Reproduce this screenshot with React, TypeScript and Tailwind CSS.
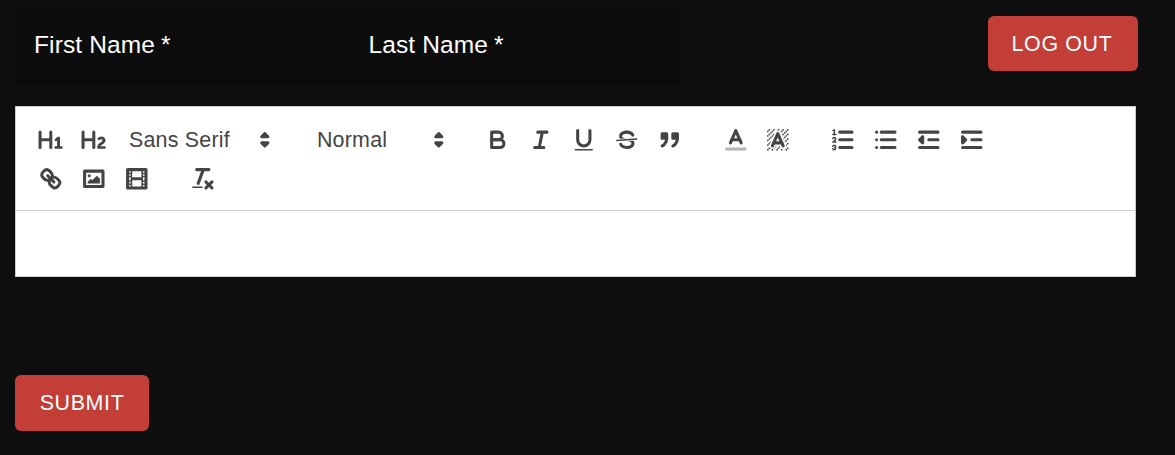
import type { ReactNode } from "react";

const S = "fill-none stroke-[#444] stroke-2 [stroke-linecap:round] [stroke-linejoin:round]";
const THIN = "fill-none stroke-[#444] stroke-1 [stroke-linecap:round] [stroke-linejoin:round]";
const SF = "fill-[#444] stroke-[#444] stroke-2 [stroke-linecap:round] [stroke-linejoin:round]";
const F = "fill-[#444]";

function Icon({ children }: { children: ReactNode }) {
  return (
    <svg viewBox="0 0 18 18" className="block size-[27.6px] shrink-0">
      {children}
    </svg>
  );
}

function Tool({ label, children }: { label: string; children: ReactNode }) {
  return (
    <button type="button" aria-label={label} className="flex h-[37px] w-[42.95px] items-center justify-center">
      <Icon>{children}</Icon>
    </button>
  );
}

function Picker({ label, className }: { label: string; className: string }) {
  return (
    <button type="button" className={`flex h-[37px] items-center justify-between text-[21.4px] leading-none text-[#444] ${className}`}>
      <span className="pt-[2px]">{label}</span>
      <Icon>
        <polygon className={S} points="7 11 9 13 11 11 7 11" />
        <polygon className={S} points="7 7 9 5 11 7 7 7" />
      </Icon>
    </button>
  );
}

const hatch = [
  [4, 4], [2, 6], [3, 5], [4, 7], [2, 12], [2, 9], [2, 15], [3, 8], [12, 2], [11, 3], [2, 3], [6, 2],
  [3, 2], [5, 3], [9, 2], [15, 14], [13, 7], [15, 5], [14, 6], [15, 8], [14, 9], [14, 3], [15, 2],
  [12, 5], [13, 4], [9, 14], [8, 15], [5, 15], [11, 15], [14, 15], [15, 11],
];

function Field({ label }: { label: string }) {
  return (
    <label className="flex h-full w-[334.5px] items-center pt-[2px] pl-[19px] text-[24.5px] leading-none tracking-[0.12px] text-white">
      {label}<span className="ml-[6px]">*</span>
    </label>
  );
}

export default function App() {
  return (
    <main className="h-[455px] w-[1175px] overflow-hidden bg-[#0e0e0e] pl-[15px] font-['Liberation_Sans',Arial,sans-serif]">
      <header className="flex h-[106px] items-start">
        <div className="mt-[8px] flex h-[73px] w-[670px] border-b border-[#080808] bg-[#0d0d0d]">
          <Field label="First Name" />
          <Field label="Last Name" />
        </div>
        <button type="button" className="mt-4 ml-[303px] h-[55px] w-[150px] rounded-[6px] bg-[#c23e37] pt-px pr-[2px] text-[21.4px] tracking-[0.65px] text-white">
          LOG OUT
        </button>
      </header>

      <section className="h-[171px] w-[1121px] border border-[#ccc] bg-white">
        <div className="flex h-[104px] flex-col gap-[2px] border-b border-[#ccc] pt-[14.4px] pl-[13px]">
          <div className="flex h-[37px] items-center">
            <Tool label="Heading 1">
              <path className={F} d="M10,4V14a1,1,0,0,1-2,0V10H3v4a1,1,0,0,1-2,0V4A1,1,0,0,1,3,4V8H8V4a1,1,0,0,1,2,0Zm6.06787,9.209H14.98975V7.59863a.54085.54085,0,0,0-.605-.60547h-.62744a1.01119,1.01119,0,0,0-.748.29688L11.645,8.56641a.5435.5435,0,0,0-.022.8584l.28613.30762a.53861.53861,0,0,0,.84717.0332l.09912-.08789a1.2137,1.2137,0,0,0,.2417-.35254h.02246s-.01123.30859-.01123.60547V13.209H12.041a.54085.54085,0,0,0-.605.60547v.43945a.54085.54085,0,0,0,.605.60547h4.02686a.54085.54085,0,0,0,.605-.60547v-.43945A.54085.54085,0,0,0,16.06787,13.209Z" />
            </Tool>
            <Tool label="Heading 2">
              <path className={F} d="M16.73975,13.81445v.43945a.54085.54085,0,0,1-.605.60547H11.855a.58392.58392,0,0,1-.64893-.60547V14.0127c0-2.90527,3.39941-3.42187,3.39941-4.55469a.77675.77675,0,0,0-.84717-.78125,1.17684,1.17684,0,0,0-.83594.38477c-.2749.26367-.561.374-.85791.13184l-.4292-.34082c-.30811-.24219-.38525-.51758-.1543-.81445a2.97155,2.97155,0,0,1,2.45361-1.17676,2.45393,2.45393,0,0,1,2.68408,2.40918c0,2.45312-3.1792,2.92676-3.27832,3.93848h2.79443A.54085.54085,0,0,1,16.73975,13.81445ZM9,3A.99974.99974,0,0,0,8,4V8H3V4A1,1,0,0,0,1,4V14a1,1,0,0,0,2,0V10H8v4a1,1,0,0,0,2,0V4A.99974.99974,0,0,0,9,3Z" />
            </Tool>
            <Picker label="Sans Serif" className="ml-[14px] w-[150px] tracking-[0.25px]" />
            <Picker label="Normal" className="ml-[38px] w-[135.8px] tracking-[0.25px]" />
            <div className="ml-[23.5px] flex">
              <Tool label="Bold">
                <path className={S} d="M5,4H9.5A2.5,2.5,0,0,1,12,6.5v0A2.5,2.5,0,0,1,9.5,9H5A0,0,0,0,1,5,9V4A0,0,0,0,1,5,4Z" />
                <path className={S} d="M5,9h5.5A2.5,2.5,0,0,1,13,11.5v0A2.5,2.5,0,0,1,10.5,14H5a0,0,0,0,1,0,0V9A0,0,0,0,1,5,9Z" />
              </Tool>
              <Tool label="Italic">
                <path className={S} d="M7,4H13M5,14H11M8,14L10,4" />
              </Tool>
              <Tool label="Underline">
                <path className={S} d="M5,3V9a4.012,4.012,0,0,0,4,4H9a4.012,4.012,0,0,0,4-4V3" />
                <rect className={F} height="1" rx="0.5" width="12" x="3" y="15" />
              </Tool>
              <Tool label="Strike">
                <path className={THIN} d="M15.5,8.5L2.5,9.5" />
                <path className={F} d="M9.007,8C6.542,7.791,6,7.519,6,6.5,6,5.792,7.283,5,9,5c1.571,0,2.765.679,2.969,1.309a1,1,0,0,0,1.9-.617C13.356,4.106,11.354,3,9,3,6.2,3,4,4.538,4,6.5a3.2,3.2,0,0,0,.5,1.843Z" />
                <path className={F} d="M8.984,10C11.457,10.208,12,10.479,12,11.5c0,0.708-1.283,1.5-3,1.5-1.571,0-2.765-.679-2.969-1.309a1,1,0,1,0-1.9.617C4.644,13.894,6.646,15,9,15c2.8,0,5-1.538,5-3.5a3.2,3.2,0,0,0-.5-1.843Z" />
              </Tool>
              <Tool label="Blockquote">
                <rect className={SF} height="3" width="3" x="4" y="5" />
                <rect className={SF} height="3" width="3" x="11" y="5" />
                <path className={SF} d="M7,8c0,4.031-3,5-3,5" />
                <path className={SF} d="M14,8c0,4.031-3,5-3,5" />
              </Tool>
            </div>
            <div className="ml-[23px] flex">
              <Tool label="Text color">
                <path className={`${S} opacity-40`} d="M3,15H15" />
                <polyline className={S} points="5.5 11 9 3 12.5 11" />
                <path className={S} d="M11.63,9H6.38" />
              </Tool>
              <Tool label="Background color">
                <g className={F}>
                  {hatch.map(([x, y]) => (
                    <rect key={`${x}-${y}`} x={x} y={y} width="1" height="1" />
                  ))}
                  <polygon points="6 6.868 6 6 5 6 5 7 5.942 7 6 6.868" />
                  <polygon points="6.817 5 6 5 6 6 6.38 6 6.817 5" />
                  <polygon points="4 11.439 4 11 3 11 3 12 3.755 12 4 11.439" />
                  <polygon points="4.63 10 4 10 4 11 4.192 11 4.63 10" />
                  <path d="M10.832,4.2L11,4.582V4H10.708A1.948,1.948,0,0,1,10.832,4.2Z" />
                  <path d="M7,4.582L7.168,4.2A1.929,1.929,0,0,1,7.292,4H7V4.582Z" />
                  <path d="M8,13H7.683l-0.351.8a1.933,1.933,0,0,1-.124.2H8V13Z" />
                  <path d="M9,3H8V3.282A1.985,1.985,0,0,1,9,3Z" />
                  <polygon points="13.447 10.174 13.469 10.225 13.472 10.232 13.808 11 14 11 14 10 13.37 10 13.447 10.174" />
                  <path d="M3.775,14H3v1H4V14.314A1.97,1.97,0,0,1,3.775,14Z" />
                  <polygon points="12 6.868 12 6 11.62 6 12 6.868" />
                  <polygon points="12.933 9 13 9 13 8 12.495 8 12.933 9" />
                  <path d="M6,14.926V15H7V14.316A1.993,1.993,0,0,1,6,14.926Z" />
                  <path d="M10.668,13.8L10.317,13H10v1h0.792A1.947,1.947,0,0,1,10.668,13.8Z" />
                  <path d="M14.332,12.2a1.99,1.99,0,0,1,.166.8H15V12H14.245Z" />
                </g>
                <polyline className={S} points="5.5 13 9 5 12.5 13" />
                <path className={S} d="M11.63,11H6.38" />
              </Tool>
            </div>
            <div className="ml-[22px] flex">
              <Tool label="Ordered list">
                <path className={S} d="M7,4H15M7,9H15M7,14H15" />
                <path className={THIN} d="M2.5,5.5H4.5" />
                <path className={F} d="M3.5,6A0.5,0.5,0,0,1,3,5.5V3.085l-0.276.138A0.5,0.5,0,0,1,2.053,3c-0.124-.247-0.023-0.324.224-0.447l1-.5A0.5,0.5,0,0,1,4,2.5v3A0.5,0.5,0,0,1,3.5,6Z" />
                <path className={THIN} d="M4.5,10.5h-2c0-.234,1.85-1.076,1.85-2.234A0.959,0.959,0,0,0,2.5,8.156" />
                <path className={THIN} d="M2.5,14.846a0.959,0.959,0,0,0,1.85-.109A0.7,0.7,0,0,0,3.75,14a0.688,0.688,0,0,0,.6-0.736,0.959,0.959,0,0,0-1.85-.109" />
              </Tool>
              <Tool label="Bullet list">
                <path className={S} d="M6,4H15M6,9H15M6,14H15M3,4H3M3,9H3M3,14H3" />
              </Tool>
              <Tool label="Outdent">
                <path className={S} d="M3,14H15M3,4H15M9,9H15" />
                <polyline className={SF} points="5 7 5 11 3 9 5 7" />
              </Tool>
              <Tool label="Indent">
                <path className={S} d="M3,14H15M3,4H15M9,9H15" />
                <polyline className={SF} points="3 7 3 11 5 9 3 7" />
              </Tool>
            </div>
          </div>

          <div className="flex h-[37px] items-center">
            <Tool label="Link">
              <path className={S} d="M7,7L11,11" />
              <path className={S} d="M8.9,4.577a3.476,3.476,0,0,1,.36,4.679A3.476,3.476,0,0,1,4.577,8.9C3.185,7.5,2.035,6.4,4.217,4.217S7.5,3.185,8.9,4.577Z" />
              <path className={S} d="M13.423,9.1a3.476,3.476,0,0,0-4.679-.36,3.476,3.476,0,0,0,.36,4.679c1.392,1.392,2.5,2.542,4.679.36S14.815,10.5,13.423,9.1Z" />
            </Tool>
            <Tool label="Image">
              <rect className={S} height="10" width="12" x="3" y="4" />
              <circle className={F} cx="6" cy="7" r="1" />
              <polyline className={F} points="5 12 5 11 7 9 8 10 11 7 13 9 13 12 5 12" />
            </Tool>
            <Tool label="Video">
              <rect className={S} height="12" width="12" x="3" y="3" />
              <path className={F} d="M5,3h1v12h-1ZM12,3h1v12h-1ZM5,8h8v2h-8ZM3,5h3v1h-3ZM3,7h3v1h-3ZM3,10h3v1h-3ZM3,12h3v1h-3ZM12,5h3v1h-3ZM12,7h3v1h-3ZM12,10h3v1h-3ZM12,12h3v1h-3Z" />
            </Tool>
            <div className="ml-[23.5px] flex">
              <Tool label="Clear formatting">
                <path className={S} d="M5,3H13M6,12L9.35,3M11,11L15,15M15,11L11,15" />
                <rect className={F} height="1" rx="0.5" width="7" x="2" y="14" />
              </Tool>
            </div>
          </div>
        </div>
        <div className="h-[65px]" />
      </section>

      <button type="button" className="mt-[98px] block h-[56px] w-[134px] rounded-[6px] bg-[#c23e37] text-[21.4px] tracking-[0.65px] text-white">
        SUBMIT
      </button>
    </main>
  );
}
